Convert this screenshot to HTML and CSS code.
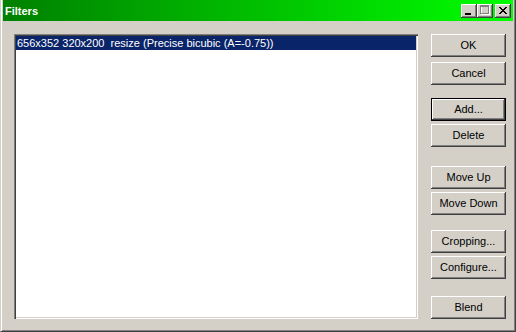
FILE: index.html
```html
<!DOCTYPE html>
<html>
<head>
<meta charset="utf-8">
<link rel="stylesheet" href="styles.css">
</head>
<body>
<div class="window">
  <div class="titlebar">
    <span class="title">Filters</span>
    <div class="tb-buttons">
      <div class="tb-btn"><svg width="16" height="14" viewBox="0 0 16 14"><rect x="4" y="9" width="6" height="2" fill="#000"/></svg></div>
      <div class="tb-btn"><svg width="16" height="14" viewBox="0 0 16 14"><rect x="4.5" y="2.5" width="8" height="8" fill="none" stroke="#fff"/><rect x="3.5" y="1.5" width="8" height="8" fill="none" stroke="#808080"/><rect x="3" y="1" width="9" height="2" fill="#808080"/></svg></div>
      <div class="tb-btn close"><svg width="16" height="14" viewBox="0 0 16 14"><path d="M4 3 L11 10 M5 3 L12 10 M11 3 L4 10 M12 3 L5 10" stroke="#000" stroke-width="1" fill="none" shape-rendering="crispEdges"/></svg></div>
    </div>
  </div>
  <div class="content">
    <div class="listbox">
      <div class="item selected">656x352 320x200&nbsp; resize (Precise bicubic (A=-0.75))</div>
    </div>
    <div class="buttons">
      <div class="btn b-ok">OK</div>
      <div class="btn b-cancel">Cancel</div>
      <div class="btn default b-add">Add...</div>
      <div class="btn b-delete">Delete</div>
      <div class="btn b-up">Move Up</div>
      <div class="btn b-down">Move Down</div>
      <div class="btn b-crop">Cropping...</div>
      <div class="btn b-conf">Configure...</div>
      <div class="btn b-blend">Blend</div>
    </div>
  </div>
</div>
</body>
</html>
```
FILE: styles.css
```css
html, body { margin: 0; padding: 0; }
body {
  width: 516px;
  height: 332px;
  font-family: "Liberation Sans", Arial, sans-serif;
  font-size: 11px;
  overflow: hidden;
}
.window {
  width: 516px;
  height: 332px;
  box-sizing: border-box;
  background: #d4d0c8;
  border-left: 1px solid #d4d0c8;
  border-right: 1px solid #404040;
  border-bottom: 1px solid #404040;
  box-shadow: inset 1px 0 #fff, inset -1px -1px #808080;
  padding: 0 2px 2px 2px;
  display: flex;
  flex-direction: column;
}
.titlebar {
  height: 21px;
  flex: none;
  background: linear-gradient(to right, #008000, #00ff00);
  display: flex;
  align-items: center;
  padding: 0 2px;
}
.title {
  color: #fff;
  font-weight: bold;
  font-size: 11px;
  flex: 1;
}
.tb-buttons { display: flex; align-items: center; }
.tb-btn {
  width: 16px;
  height: 14px;
  box-sizing: border-box;
  background: #d4d0c8;
  box-shadow: inset -1px -1px #404040, inset 1px 1px #fff, inset -2px -2px #808080;
  display: flex;
}
.tb-btn svg { display: block; }
.tb-btn.close { margin-left: 2px; }
.content {
  flex: 1;
  display: flex;
  padding: 13px 7px 11px 11px;
  gap: 13px;
}
.listbox {
  flex: 1;
  background: #fff;
  box-shadow: inset 1px 1px #808080, inset 2px 2px #404040, inset -1px -1px #fff, inset -2px -2px #d4d0c8;
  padding: 2px;
}
.item {
  height: 14px;
  line-height: 14px;
  padding-left: 1px;
  white-space: nowrap;
}
.item.selected { background: #0a246a; color: #fff; }
.buttons {
  width: 75px;
  display: flex;
  flex-direction: column;
}
.btn {
  width: 75px;
  height: 23px;
  box-sizing: border-box;
  padding-bottom: 2px;
  background: #d4d0c8;
  color: #000;
  display: flex;
  align-items: center;
  justify-content: center;
  box-shadow: inset -1px -1px #404040, inset 1px 1px #fff, inset -2px -2px #808080;
}
.btn.default {
  border: 1px solid #000;
  box-shadow: inset -1px -1px #404040, inset 1px 1px #fff, inset -2px -2px #808080;
}
.b-cancel { margin-top: 5px; }
.b-add { margin-top: 13px; }
.b-delete { margin-top: 3px; }
.b-up { margin-top: 19px; }
.b-down { margin-top: 3px; }
.b-crop { margin-top: 15px; }
.b-conf { margin-top: 3px; }
.b-blend { margin-top: 17px; }
```
